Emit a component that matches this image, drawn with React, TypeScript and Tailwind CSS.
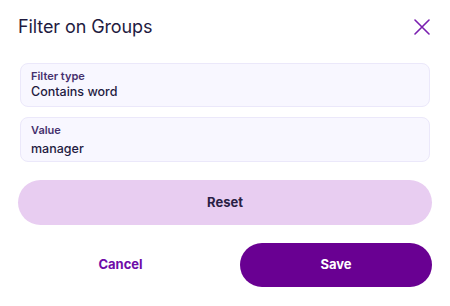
import React from "react";

export default function App() {
  return (
    <div className="w-[450px] h-[306px] bg-white px-[18px] pt-[14px]" style={{ fontFamily: "Inter, 'Noto Sans', sans-serif" }}>
      <div className="flex items-center justify-between h-[26px]">
        <h1 className="text-[18px] leading-[26px] text-[#1f1b3f] font-normal tracking-[-0.1px]">Filter on Groups</h1>
        <button className="w-[16px] h-[16px] mr-[2px] flex items-center justify-center">
          <svg width="16" height="16" viewBox="0 0 16 16" fill="none">
            <path d="M1 1L15 15M15 1L1 15" stroke="#7a1fb0" strokeWidth="1.6" strokeLinecap="round" />
          </svg>
        </button>
      </div>
      <div className="mt-[23px] mx-[2px] flex flex-col gap-[10px]">
        <div className="h-[44px] rounded-[8px] border border-[#ebe8fa] bg-[#f8f7ff] pl-[10px] pt-[5px]">
          <div className="text-[11px] leading-[14px] font-semibold text-[#45306e]">Filter type</div>
          <div className="text-[12.5px] leading-[18px] text-[#1f1b3f] font-medium">Contains word</div>
        </div>
        <div className="h-[45px] rounded-[8px] border border-[#ebe8fa] bg-[#f8f7ff] pl-[10px] pt-[5px]">
          <div className="text-[11px] leading-[14px] font-semibold text-[#45306e]">Value</div>
          <div className="text-[12.5px] leading-[18px] mt-[3px] text-[#1f1b3f] font-medium">manager</div>
        </div>
      </div>
      <button className="mt-[18px] w-full h-[45px] rounded-full bg-[#e8cdf1] text-[13px] font-bold text-[#2a1f45]">Reset</button>
      <div className="mt-[18px] flex gap-[17px]">
        <button className="w-[205px] h-[44px] text-[13px] font-bold text-[#6e0ba8]">Cancel</button>
        <button className="w-[192px] h-[44px] rounded-full bg-[#690092] text-[13px] font-bold text-white">Save</button>
      </div>
    </div>
  );
}
